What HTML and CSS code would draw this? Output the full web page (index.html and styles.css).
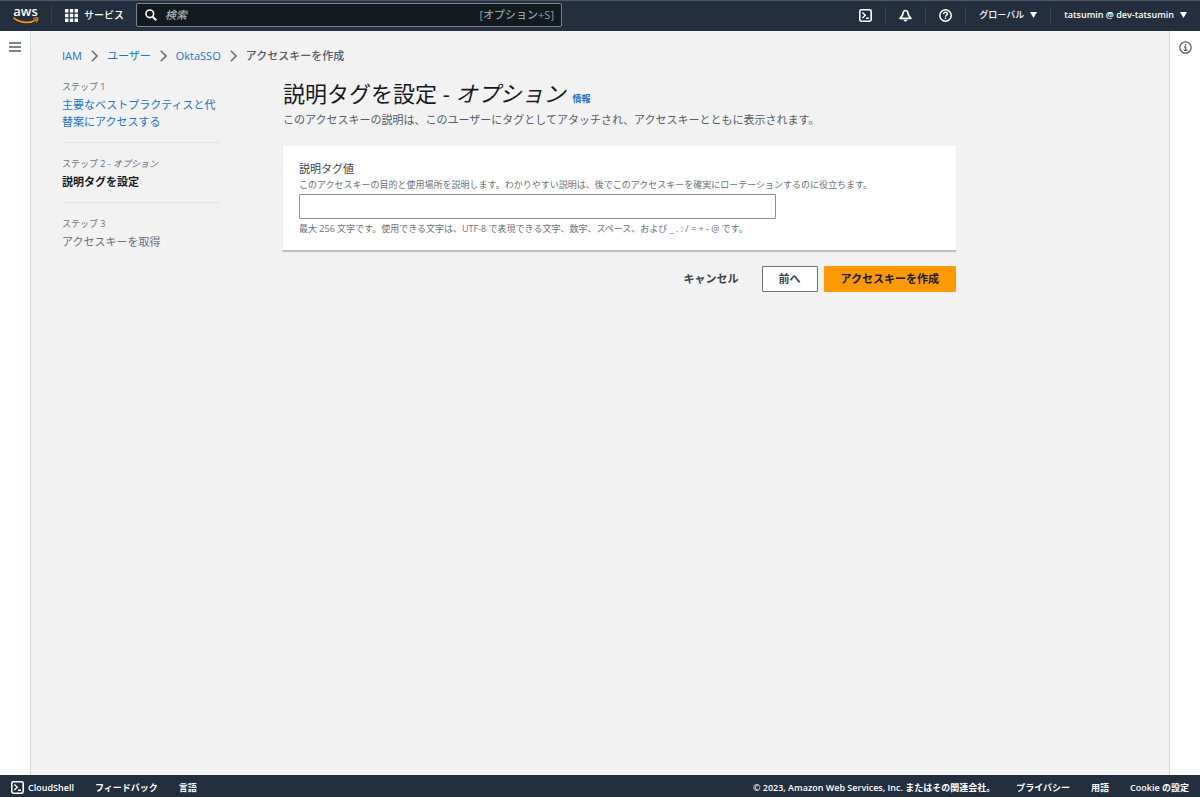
FILE: index.html
```html
<!DOCTYPE html>
<html lang="ja">
<head>
  <meta charset="UTF-8">
  <meta name="viewport" content="width=device-width, initial-scale=1">
  <title>アクセスキーを作成 | IAM</title>
  <link rel="stylesheet" href="styles.css">
</head>
<body>
  <header class="topbar">
    <a class="logo" href="#" aria-label="aws">
      <span>aws</span>
      <svg width="26" height="7" viewBox="0 0 26 7" fill="none" stroke="#ff9900">
        <path d="M1 1.2C7 6.2 17 6.8 23 2.8" stroke-width="1.6" stroke-linecap="round"/>
        <path d="M20.5 1.2C23 .6 25 .7 25 1.2s-.4 2.4-1.5 3.6" stroke-width="1.1" stroke-linecap="round"/>
      </svg>
    </a>
    <button class="services" type="button">
      <svg width="13" height="13" viewBox="0 0 13 13" fill="#fff">
        <path d="M0 0h3.4v3.4H0zM4.8 0h3.4v3.4H4.8zM9.6 0H13v3.4H9.6zM0 4.8h3.4v3.4H0zM4.8 4.8h3.4v3.4H4.8zM9.6 4.8H13v3.4H9.6zM0 9.6h3.4V13H0zM4.8 9.6h3.4V13H4.8zM9.6 9.6H13V13H9.6z"/>
      </svg>
      サービス
    </button>
    <label class="search">
      <svg width="12" height="12" viewBox="0 0 12 12" fill="none" stroke="#fff" stroke-width="1.6">
        <circle cx="4.8" cy="4.8" r="3.8"/>
        <path d="M7.6 7.6l3.6 3.6" stroke-width="2"/>
      </svg>
      <input type="search" placeholder="検索" aria-label="検索">
      <span>[オプション+S]</span>
    </label>
    <nav class="tools">
      <button type="button" aria-label="CloudShell">
        <svg width="13" height="13" viewBox="0 0 13 13" fill="none" stroke="#fff" stroke-width="1.6">
          <rect x=".8" y=".8" width="11.4" height="11.4" rx="1.6"/>
          <path d="M3.4 3.6l2.9 2.7-2.9 2.8M7 9.3h3" stroke-width="1.4"/>
        </svg>
      </button>
      <button type="button" aria-label="通知">
        <svg width="13" height="13" viewBox="0 0 13 13" fill="none" stroke="#fff" stroke-width="1.7" stroke-linejoin="round">
          <path d="M6.5 1.5C4.800 1.500 4.200 3 4 4.500 3.800 6.400 2.800 7.300 1.100 9.300h10.800C10.200 7.300 9.200 6.400 9 4.500 8.800 3 8.200 1.500 6.500 1.500z"/>
          <path d="M4.500 10.400h4c-.2 1.400-1 2.100-2 2.100s-1.800-.7-2-2.100z" fill="#fff" stroke="none"/>
        </svg>
      </button>
      <button type="button" aria-label="ヘルプ">
        <svg width="13" height="13" viewBox="0 0 13 13" fill="none" stroke="#fff" stroke-width="1.5">
          <circle cx="6.5" cy="6.5" r="5.7"/>
          <path d="M4.600 5.200c0-1.200.8-1.900 1.900-1.900s1.900.7 1.900 1.700c0 1.300-1.900 1.300-1.900 2.700M6.500 8.600v1.300" stroke-width="1.400"/>
        </svg>
      </button>
      <button class="menu" type="button">グローバル
        <svg width="7" height="6" viewBox="0 0 7 6" fill="#fff"><path d="M0 0h7L3.5 6z"/></svg>
      </button>
      <button class="menu account" type="button">tatsumin @ dev-tatsumin
        <svg width="7" height="6" viewBox="0 0 7 6" fill="#fff"><path d="M0 0h7L3.5 6z"/></svg>
      </button>
    </nav>
  </header>

  <div class="layout">
    <aside class="rail">
      <button type="button" aria-label="メニューを開く">
        <svg width="12" height="10" viewBox="0 0 12 10" stroke="#545b64" stroke-width="1.4"><path d="M0 1h12M0 5h12M0 9h12"/></svg>
      </button>
    </aside>

    <main class="content">
      <nav class="breadcrumb" aria-label="パンくずリスト">
        <a href="#">IAM</a>
        <svg width="7" height="12" viewBox="0 0 7 12"><path d="M.8.8L6 6 .8 11.2"/></svg>
        <a href="#">ユーザー</a>
        <svg width="7" height="12" viewBox="0 0 7 12"><path d="M.8.8L6 6 .8 11.2"/></svg>
        <a href="#">OktaSSO</a>
        <svg width="7" height="12" viewBox="0 0 7 12"><path d="M.8.8L6 6 .8 11.2"/></svg>
        <span>アクセスキーを作成</span>
      </nav>

      <div class="wizard">
        <ol class="steps">
          <li>
            <small>ステップ 1</small>
            <a href="#">主要なベストプラクティスと代替案にアクセスする</a>
          </li>
          <li>
            <small>ステップ 2 - <i>オプション</i></small>
            <b>説明タグを設定</b>
          </li>
          <li>
            <small>ステップ 3</small>
            <span>アクセスキーを取得</span>
          </li>
        </ol>

        <form class="form">
          <div class="heading">
            <h1>説明タグを設定 - <i>オプション</i></h1>
            <a href="#">情報</a>
          </div>
          <p class="description">このアクセスキーの説明は、このユーザーにタグとしてアタッチされ、アクセスキーとともに表示されます。</p>

          <div class="card">
            <label for="tagValue">説明タグ値</label>
            <p class="hint">このアクセスキーの目的と使用場所を説明します。わかりやすい説明は、後でこのアクセスキーを確実にローテーションするのに役立ちます。</p>
            <input type="text" id="tagValue" name="tagValue" maxlength="256">
            <p class="hint">最大 256 文字です。使用できる文字は、UTF-8 で表現できる文字、数字、スペース、および _ . : / = + - @ です。</p>
          </div>

          <div class="actions">
            <button class="btn link" type="button">キャンセル</button>
            <button class="btn" type="button">前へ</button>
            <button class="btn primary" type="submit">アクセスキーを作成</button>
          </div>
        </form>
      </div>
    </main>

    <aside class="rail right">
      <button type="button" aria-label="情報パネルを開く">
        <svg width="13" height="13" viewBox="0 0 13 13" fill="none" stroke="#545b64" stroke-width="1.2">
          <circle cx="6.5" cy="6.5" r="5.7"/>
          <path d="M6.500 3v1.400M5 5.800h1.600v3.400M4.800 9.300h3.500" stroke-width="1.300"/>
        </svg>
      </button>
    </aside>
  </div>

  <footer class="footer">
    <button type="button">
      <svg width="13" height="13" viewBox="0 0 13 13" fill="none" stroke="#fff" stroke-width="1.6">
        <rect x=".8" y=".8" width="11.4" height="11.4" rx="1.6"/>
        <path d="M3.4 3.6l2.9 2.7-2.9 2.8M7 9.3h3" stroke-width="1.4"/>
      </svg>
      CloudShell
    </button>
    <a href="#">フィードバック</a>
    <button type="button">言語</button>
    <span class="copyright">© 2023, Amazon Web Services, Inc. またはその関連会社。</span>
    <a href="#">プライバシー</a>
    <a href="#">用語</a>
    <a href="#">Cookie の設定</a>
  </footer>
</body>
</html>
```
FILE: styles.css
```css
* {
  box-sizing: border-box;
}
body {
  margin: 0;
  min-height: 100vh;
  display: flex;
  flex-direction: column;
  background: #f2f2f2;
  color: #16191f;
  font-family: 'Open Sans', 'Noto Sans CJK JP', sans-serif;
  font-size: 11px;
  line-height: 18px;
}
a {
  color: #1a73c4;
  text-decoration: none;
}
a:hover {
  text-decoration: underline;
}
button, input {
  font: inherit;
  color: inherit;
}
button {
  background: none;
  border: none;
  padding: 0;
  cursor: pointer;
}
svg {
  display: block;
  flex: none;
}
h1, p, ol {
  margin: 0;
  padding: 0;
}

/* Top navigation */
.topbar {
  height: 31px;
  display: flex;
  align-items: center;
  padding-bottom: 2px;
  background: #232f3e;
  border-top: 1px solid #4b5867;
  color: #fff;
}
.logo {
  width: 52px;
  height: 18px;
  display: flex;
  flex-direction: column;
  align-items: center;
  border-right: 1px solid #36424f;
  color: #fff;
  font-size: 13px;
  font-weight: 600;
  line-height: 11px;
}
.services {
  display: flex;
  align-items: center;
  gap: 6px;
  padding: 0 12px 0 13px;
  font-size: 10px;
  font-weight: 500;
}
.search {
  flex: 0 1 426px;
  height: 24px;
  display: flex;
  align-items: center;
  gap: 8px;
  padding: 0 7px 0 8px;
  background: #12191f;
  border: 1px solid #7b858c;
  border-radius: 2px;
  color: #95a0a6;
  font-weight: 500;
}
.search input {
  flex: 1;
  min-width: 0;
  padding: 0;
  border: none;
  outline: none;
  background: none;
}
.search input::placeholder {
  color: #aab7b8;
  font-style: italic;
}
.tools {
  display: flex;
  align-items: center;
  margin-left: auto;
}
.tools button {
  height: 18px;
  padding: 0 13px;
  border-left: 1px solid #36424f;
}
.tools button:first-child {
  border-left: none;
}
.tools .menu {
  display: flex;
  align-items: center;
  gap: 6px;
  font-size: 9px;
  font-weight: 500;
  white-space: nowrap;
}
.tools .account {
  font-weight: 600;
}

/* Page body */
.layout {
  flex: 1;
  display: flex;
}
.rail {
  flex: none;
  width: 31px;
  padding-top: 11px;
  background: #fff;
  border-right: 1px solid #d5dbdb;
}
.rail button {
  display: flex;
  margin: 0 auto;
}
.rail.right {
  padding-top: 10px;
  border-right: none;
  border-left: 1px solid #d5dbdb;
}
.content {
  flex: 1;
  min-width: 0;
  padding: 16px 31px;
}
.breadcrumb {
  display: flex;
  align-items: center;
  gap: 9px;
  color: #545b64;
  font-weight: 500;
}
.breadcrumb a {
  font-weight: 400;
}
.breadcrumb svg {
  fill: none;
  stroke: #687078;
  stroke-width: 1.6;
}
.wizard {
  display: flex;
  gap: 63px;
  padding-top: 12px;
}
.steps {
  flex: none;
  width: 158px;
  padding-top: 1px;
  list-style: none;
  color: #687078;
}
.steps li {
  padding-bottom: 12px;
  margin-bottom: 12px;
  border-bottom: 1px solid #e1e4e4;
}
.steps li:last-child {
  border-bottom: none;
}
.steps small, .steps a, .steps b, .steps span {
  display: block;
  line-height: 17px;
}
.steps small {
  font-size: 9px;
  line-height: 18px;
}
.steps b {
  color: #16191f;
}

/* Form */
.form {
  flex: 0 1 673px;
  min-width: 0;
}
.heading {
  display: flex;
  align-items: baseline;
  gap: 7px;
}
h1 {
  font-size: 22px;
  font-weight: 400;
  line-height: 32px;
}
.heading a {
  font-size: 9px;
  font-weight: 700;
}
.description {
  padding-top: 2px;
  color: #545b64;
}
.card {
  margin: 17px 0 15px;
  padding: 15px 16px 13px;
  background: #fff;
  border-bottom: 1px solid #b8bcbd;
  box-shadow: 0 1px 1px rgba(0, 28, 36, 0.2);
}
.card label {
  display: block;
  color: #3c434b;
  line-height: 16px;
}
.hint {
  color: #687078;
  font-size: 9px;
  line-height: 16px;
}
.card input {
  display: block;
  width: 100%;
  max-width: 477px;
  height: 25px;
  margin: 1px 0 2px;
  padding: 0 8px;
  border: 1px solid #879196;
  border-radius: 1px;
}
.actions {
  display: flex;
  justify-content: flex-end;
  gap: 6px;
}
.btn {
  height: 26px;
  padding: 0 16px;
  background: #fff;
  border: 1px solid #687078;
  border-radius: 1px;
  color: #3c434b;
  font-weight: 700;
}
.btn.link {
  background: none;
  border-color: transparent;
}
.btn.primary {
  background: #ff9900;
  border-color: #ff9900;
  color: #16191f;
}

/* Footer */
.footer {
  height: 22px;
  display: flex;
  align-items: center;
  gap: 21px;
  padding: 3px 11px 0;
  background: #232f3e;
  color: #fff;
  font-size: 9px;
  font-weight: 600;
}
.footer a {
  color: #fff;
}
.footer button {
  display: flex;
  align-items: center;
  gap: 4px;
}
.copyright {
  margin-left: auto;
}
```
